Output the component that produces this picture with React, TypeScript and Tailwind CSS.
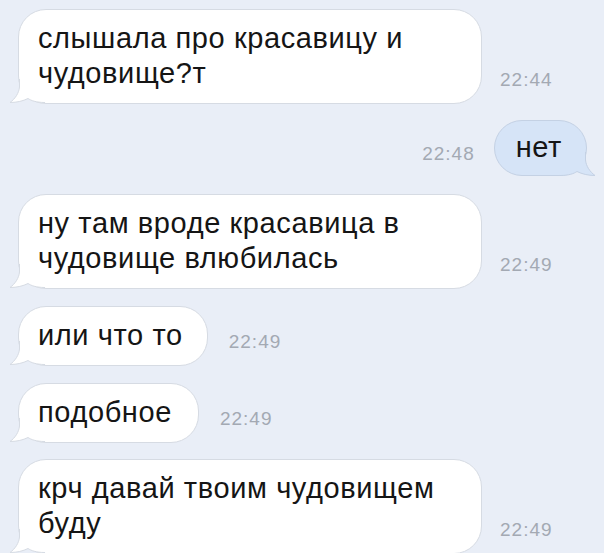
import React from "react";

const font = { fontFamily: '"Liberation Sans", Arial, sans-serif' };

function TailLeft() {
  return (
    <svg
      className="absolute left-[-10px] bottom-[-2px]"
      width="36"
      height="26"
      viewBox="0 0 36 26"
    >
      <path
        d="M10.5 0 L10.5 8 C10 14 6 20 1 23.5 C8 23.5 14 22 19 19.5 C22 21.5 27 23.5 36 23.5 L36 0 Z"
        fill="#ffffff"
      />
      <path
        d="M10.5 0 L10.5 8 C10 14 6 20 1 23.5 C8 23.5 14 22 19 19.5 C22 21.5 27 23.5 36 23.5"
        fill="none"
        stroke="#d6dbe3"
        strokeWidth="1"
      />
    </svg>
  );
}

function TailRight() {
  return (
    <svg
      className="absolute right-[-10px] bottom-[-3px]"
      width="36"
      height="26"
      viewBox="0 0 36 26"
    >
      <path
        d="M25.5 0 L25.5 8 C26 14 30 20 35 23.5 C28 23.5 22 22 17 19.5 C14 21.5 9 23.5 0 23.5 L0 0 Z"
        fill="#d6e4f7"
      />
      <path
        d="M25.5 0 L25.5 8 C26 14 30 20 35 23.5 C28 23.5 22 22 17 19.5 C14 21.5 9 23.5 0 23.5"
        fill="none"
        stroke="#c4d1e4"
        strokeWidth="1"
      />
    </svg>
  );
}

function Time({ t, cls }: { t: string; cls: string }) {
  return (
    <div
      className={`text-[19px] leading-[20px] tracking-[1px] text-[#a3a9b3] font-light ${cls}`}
      style={font}
    >
      {t}
    </div>
  );
}

function Incoming({
  text,
  time,
  wide,
  padRight = "pr-[22px]",
}: {
  text: React.ReactNode;
  time: string;
  wide?: boolean;
  padRight?: string;
}) {
  return (
    <div className="flex items-end pl-[18px]">
      <div
        className={`relative bg-white border border-[#d6dbe3] rounded-[28px] pl-[19px] ${padRight} pt-[11px] pb-[12px] text-[29px] leading-[35px] tracking-[0.6px] text-[#151515] ${
          wide ? "w-[464px]" : ""
        }`}
        style={font}
      >
        <TailLeft />
        <span className="relative whitespace-nowrap">{text}</span>
      </div>
      <Time t={time} cls={wide ? "ml-[18px] mb-[14px]" : "ml-[21px] mb-[14px]"} />
    </div>
  );
}

export default function App() {
  return (
    <div className="w-[604px] h-[553px] overflow-hidden bg-[#e9eef7] flex flex-col pt-[9px]">
      <Incoming
        wide
        time="22:44"
        text={
          <>
            слышала про красавицу и
            <br />
            чудовище?т
          </>
        }
      />
      <div className="flex items-end justify-end pr-[17px] mt-[16px]">
        <Time t="22:48" cls="mr-[19px] mb-[12px]" />
        <div
          className="relative bg-[#d6e4f7] border border-[#c4d1e4] rounded-[28px] pl-[21px] pr-[24px] pt-[9px] pb-[10px] text-[29px] leading-[35px] tracking-[0.6px] text-[#151515]"
          style={font}
        >
          <TailRight />
          <span className="relative">нет</span>
        </div>
      </div>
      <div className="mt-[18px]">
        <Incoming
          wide
          time="22:49"
          text={
            <>
              ну там вроде красавица в
              <br />
              чудовище влюбилась
            </>
          }
        />
      </div>
      <div className="mt-[17px]">
        <Incoming time="22:49" text="или что то" padRight="pr-[24px]" />
      </div>
      <div className="mt-[17px]">
        <Incoming time="22:49" text="подобное" padRight="pr-[26px]" />
      </div>
      <div className="mt-[16px]">
        <Incoming
          wide
          time="22:49"
          text={
            <>
              крч давай твоим чудовищем
              <br />
              буду
            </>
          }
        />
      </div>
    </div>
  );
}
